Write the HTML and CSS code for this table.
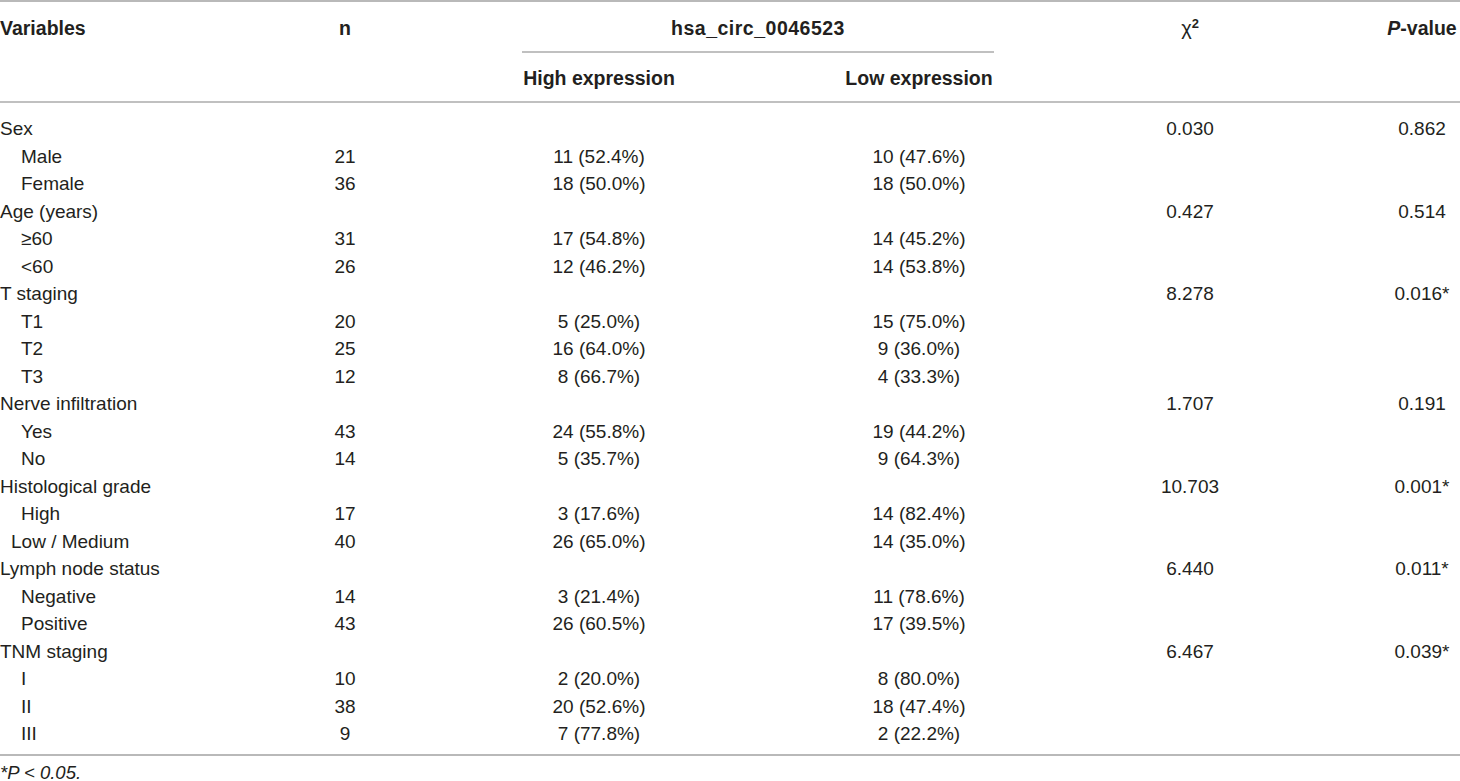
FILE: index.html
```html
<!DOCTYPE html>
<html lang="en">
<head>
    <meta charset="UTF-8">
    <meta name="viewport" content="width=device-width, initial-scale=1.0">
    <title>hsa_circ_0046523 expression and clinicopathological features</title>
    <link rel="stylesheet" href="styles.css">
</head>
<body>
    <table class="stats">
        <colgroup>
            <col class="col-var">
            <col class="col-n">
            <col class="col-high">
            <col class="col-low">
            <col class="col-chi">
            <col class="col-p">
        </colgroup>
        <thead>
            <tr class="head-top">
                <th rowspan="2" class="left">Variables</th>
                <th rowspan="2">n</th>
                <th colspan="2" class="group"><div class="group-label">hsa_circ_0046523</div></th>
                <th rowspan="2"><span class="chi">χ</span><sup>2</sup></th>
                <th rowspan="2" class="pcol"><i>P</i>-value</th>
            </tr>
            <tr class="head-sub">
                <th>High expression</th>
                <th>Low expression</th>
            </tr>
        </thead>
        <tbody>
            <tr class="first"><td class="left">Sex</td><td></td><td></td><td></td><td>0.030</td><td class="pcol">0.862</td></tr>
            <tr><td class="sub">Male</td><td>21</td><td>11 (52.4%)</td><td>10 (47.6%)</td><td></td><td class="pcol"></td></tr>
            <tr><td class="sub">Female</td><td>36</td><td>18 (50.0%)</td><td>18 (50.0%)</td><td></td><td class="pcol"></td></tr>
            <tr><td class="left">Age (years)</td><td></td><td></td><td></td><td>0.427</td><td class="pcol">0.514</td></tr>
            <tr><td class="sub">≥60</td><td>31</td><td>17 (54.8%)</td><td>14 (45.2%)</td><td></td><td class="pcol"></td></tr>
            <tr><td class="sub">&lt;60</td><td>26</td><td>12 (46.2%)</td><td>14 (53.8%)</td><td></td><td class="pcol"></td></tr>
            <tr><td class="left">T staging</td><td></td><td></td><td></td><td>8.278</td><td class="pcol">0.016*</td></tr>
            <tr><td class="sub">T1</td><td>20</td><td>5 (25.0%)</td><td>15 (75.0%)</td><td></td><td class="pcol"></td></tr>
            <tr><td class="sub">T2</td><td>25</td><td>16 (64.0%)</td><td>9 (36.0%)</td><td></td><td class="pcol"></td></tr>
            <tr><td class="sub">T3</td><td>12</td><td>8 (66.7%)</td><td>4 (33.3%)</td><td></td><td class="pcol"></td></tr>
            <tr><td class="left">Nerve infiltration</td><td></td><td></td><td></td><td>1.707</td><td class="pcol">0.191</td></tr>
            <tr><td class="sub">Yes</td><td>43</td><td>24 (55.8%)</td><td>19 (44.2%)</td><td></td><td class="pcol"></td></tr>
            <tr><td class="sub">No</td><td>14</td><td>5 (35.7%)</td><td>9 (64.3%)</td><td></td><td class="pcol"></td></tr>
            <tr><td class="left">Histological grade</td><td></td><td></td><td></td><td>10.703</td><td class="pcol">0.001*</td></tr>
            <tr><td class="sub">High</td><td>17</td><td>3 (17.6%)</td><td>14 (82.4%)</td><td></td><td class="pcol"></td></tr>
            <tr><td class="sub half">Low / Medium</td><td>40</td><td>26 (65.0%)</td><td>14 (35.0%)</td><td></td><td class="pcol"></td></tr>
            <tr><td class="left">Lymph node status</td><td></td><td></td><td></td><td>6.440</td><td class="pcol">0.011*</td></tr>
            <tr><td class="sub">Negative</td><td>14</td><td>3 (21.4%)</td><td>11 (78.6%)</td><td></td><td class="pcol"></td></tr>
            <tr><td class="sub">Positive</td><td>43</td><td>26 (60.5%)</td><td>17 (39.5%)</td><td></td><td class="pcol"></td></tr>
            <tr><td class="left">TNM staging</td><td></td><td></td><td></td><td>6.467</td><td class="pcol">0.039*</td></tr>
            <tr><td class="sub">I</td><td>10</td><td>2 (20.0%)</td><td>8 (80.0%)</td><td></td><td class="pcol"></td></tr>
            <tr><td class="sub">II</td><td>38</td><td>20 (52.6%)</td><td>18 (47.4%)</td><td></td><td class="pcol"></td></tr>
            <tr class="last"><td class="sub">III</td><td>9</td><td>7 (77.8%)</td><td>2 (22.2%)</td><td></td><td class="pcol"></td></tr>
        </tbody>
    </table>
    <p class="note"><i>*P &lt; 0.05.</i></p>
</body>
</html>
```

FILE: styles.css
```css
/* General Styles */
body {
    margin: 0;
    padding: 0;
    background-color: #fff;
    font-family: "Liberation Sans", Arial, sans-serif;
    color: #231f20;
}

/* Table */
.stats {
    width: 1460px;
    table-layout: fixed;
    border-collapse: collapse;
    font-size: 19px;
    border-top: 2px solid #b9b9b9;
    border-bottom: 2px solid #b9b9b9;
}

.col-var { width: 260px; }
.col-n { width: 170px; }
.col-high { width: 338px; }
.col-low { width: 302px; }
.col-chi { width: 240px; }
.col-p { width: 150px; }

.stats th,
.stats td {
    padding: 0;
    text-align: center;
    white-space: nowrap;
}

.stats .left {
    text-align: left;
}

.stats .pcol {
    padding-left: 74px;
}

/* Header */
.stats thead {
    border-bottom: 2px solid #c0c0c0;
}

.stats th {
    font-weight: bold;
    font-size: 19.5px;
    vertical-align: top;
}

.head-top th {
    height: 49px;
    padding-top: 15px;
    box-sizing: border-box;
}

.head-top .group {
    padding-top: 15px;
}

.group-label {
    margin: 0 76px 0 92px;
    padding-bottom: 11px;
    border-bottom: 2px solid #c0c0c0;
    letter-spacing: 0.5px;
}

.head-sub th {
    height: 49px;
    padding-top: 14px;
    box-sizing: border-box;
}

.chi {
    font-weight: normal;
    font-size: 20px;
}

.stats sup {
    font-size: 13px;
    line-height: 0;
}

/* Body rows */
.stats td {
    height: 27.5px;
    line-height: 27.5px;
}

.stats td.sub {
    text-align: left;
    padding-left: 21px;
}

.stats td.half {
    padding-left: 11px;
}

.first td {
    padding-top: 12px;
}

.first td.pcol {
    padding-left: 74px;
}

.last td {
    padding-bottom: 6px;
}

.last td.sub {
    padding-left: 21px;
}

/* Footnote */
.note {
    margin: 5px 0 0;
    font-size: 18.5px;
    line-height: 24px;
}
```
